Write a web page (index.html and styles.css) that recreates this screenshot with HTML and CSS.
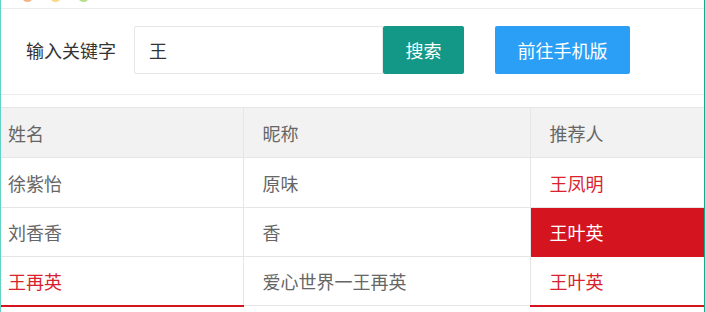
FILE: index.html
```html
<!DOCTYPE html>
<html lang="zh-CN">
<head>
<meta charset="utf-8">
<title>搜索</title>
<link rel="stylesheet" href="styles.css">
</head>
<body>
<div class="frame">
  <div class="topbar">
    <span class="dot dot-orange"></span>
    <span class="dot dot-yellow"></span>
    <span class="dot dot-green"></span>
  </div>
  <div class="search">
    <label class="search-label" for="kw">输入关键字</label>
    <input id="kw" class="search-input" type="text" value="王">
    <button class="btn btn-search" type="button">搜索</button>
    <button class="btn btn-mobile" type="button">前往手机版</button>
  </div>
  <table class="grid">
    <colgroup>
      <col class="c1"><col class="c2"><col class="c3">
    </colgroup>
    <thead>
      <tr><th class="first">姓名</th><th>昵称</th><th>推荐人</th></tr>
    </thead>
    <tbody>
      <tr><td class="first">徐紫怡</td><td>原味</td><td class="red">王凤明</td></tr>
      <tr class="short"><td class="first">刘香香</td><td>香</td><td class="hl">王叶英</td></tr>
      <tr class="short"><td class="first red redline">王再英</td><td>爱心世界一王再英</td><td class="red redline">王叶英</td></tr>
    </tbody>
  </table>
</div>
</body>
</html>
```

FILE: styles.css
```css
* { box-sizing: border-box; }
html, body { margin: 0; padding: 0; background: #fff; }
body {
  font-family: "Noto Sans CJK SC", "Noto Sans", sans-serif;
  font-size: 18px;
  color: #333;
}
.frame {
  width: 705px;
  height: 312px;
  overflow: hidden;
  border-left: 1px solid #63d2c4;
  border-right: 1px solid #17a88e;
}
.topbar {
  height: 9px;
  border-bottom: 1px solid #ececec;
  display: flex;
  gap: 17px;
  padding-left: 21px;
  overflow: hidden;
}
.dot {
  display: block;
  width: 11px;
  height: 11px;
  border-radius: 50%;
  margin-top: -9px;
}
.dot-orange { background: #f3b48a; }
.dot-yellow { background: #f8d98a; }
.dot-green { background: #b5e08e; }
.search {
  display: flex;
  align-items: center;
  padding: 17px 0 20px 25px;
  border-bottom: 1px solid #ececec;
}
.search-label {
  color: #333;
  margin-right: 18px;
  width: 90px;
}
.search-input {
  width: 249px;
  height: 48px;
  border: 1px solid #e6e6e6;
  border-radius: 2px 0 0 2px;
  padding: 0 14px;
  font: inherit;
  color: #333;
  outline: none;
}
.btn {
  height: 48px;
  border: none;
  border-radius: 2px;
  color: #fff;
  font: inherit;
  padding: 0;
}
.btn-search {
  width: 81px;
  background: #139786;
}
.btn-mobile {
  width: 135px;
  margin-left: 31px;
  background: #2b9ff6;
}
.grid {
  margin-top: 12px;
  width: 703px;
  border-collapse: collapse;
  table-layout: fixed;
  color: #666;
}
.c1 { width: 242px; }
.c2 { width: 287px; }
.c3 { width: 174px; }
.grid th, .grid td {
  height: 50px;
  padding: 0 0 0 19px;
  border: 1px solid #e6e6e6;
  text-align: left;
  font-weight: normal;
  vertical-align: middle;
}
.grid tr.short td { height: 49px; }
.grid th:last-child, .grid td:last-child { border-right: none; }
.grid th.first, .grid td.first { border-left: none; padding-left: 7px; }
.grid thead th { background: #f2f2f2; }
.grid .red { color: #d9222c; }
.grid .hl { background: #d4151f; color: #fff; border-color: #d4151f; }
.grid .redline { border-bottom: 2px solid #d4151f; }
```
